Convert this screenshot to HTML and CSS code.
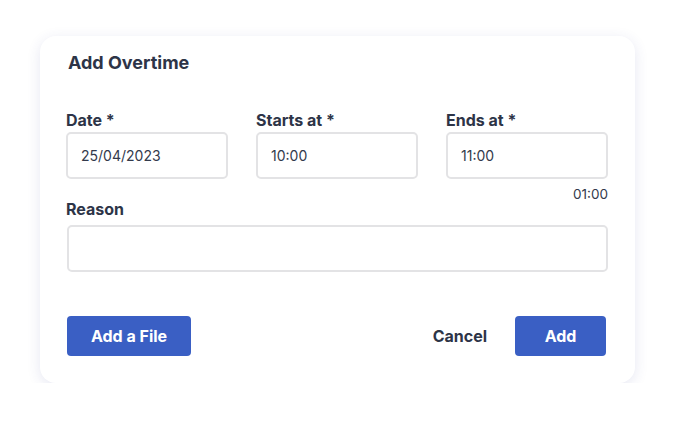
FILE: index.html
```html
<!DOCTYPE html>
<html>
<head>
<meta charset="utf-8">
<link rel="stylesheet" href="styles.css">
</head>
<body>
<div class="page">
  <div class="card">
    <h1 class="title">Add Overtime</h1>
    <div class="row">
      <div class="field">
        <label class="label">Date *</label>
        <div class="input">25/04/2023</div>
      </div>
      <div class="field">
        <label class="label">Starts at *</label>
        <div class="input">10:00</div>
      </div>
      <div class="field">
        <label class="label">Ends at *</label>
        <div class="input">11:00</div>
      </div>
    </div>
    <div class="duration">01:00</div>
    <label class="label reason-label">Reason</label>
    <div class="input reason"></div>
    <div class="actions">
      <button class="btn primary file">Add a File</button>
      <div class="right">
        <button class="btn link">Cancel</button>
        <button class="btn primary add">Add</button>
      </div>
    </div>
  </div>
</div>
</body>
</html>
```
FILE: styles.css
```css
* { box-sizing: border-box; }
html, body { margin: 0; padding: 0; background: #ffffff; }
body { font-family: "Inter", "Open Sans", sans-serif; color: #2d3447; }
.page { padding: 36px 40px 0 40px; }
.card {
  width: 595px;
  height: 347px;
  background: #fff;
  border-radius: 16px;
  box-shadow: 0 3px 14px rgba(50, 60, 150, 0.12);
  padding: 14px 27px 0 26px;
}
.title {
  margin: 0 0 0 2px;
  font-size: 18px;
  font-weight: 700;
  line-height: 26px;
  height: 26px;
  color: #2d3447;
}
.row {
  display: grid;
  grid-template-columns: 162px 162px 162px;
  column-gap: 28px;
  margin-top: 33px;
}
.field { display: flex; flex-direction: column; }
.label {
  display: block;
  font-size: 16px;
  font-weight: 700;
  line-height: 22px;
  height: 22px;
  margin-bottom: 1px;
  color: #2d3447;
}
.input {
  height: 47px;
  border: 2px solid #e3e3e5;
  border-radius: 5px;
  font-size: 14px;
  line-height: 43px;
  padding-left: 13px;
  color: #333a4c;
}
.duration {
  text-align: right;
  font-size: 13.5px;
  line-height: 18px;
  height: 18px;
  margin-top: 6px;
  color: #333a4c;
}
.reason-label { margin-top: -5px; margin-bottom: 5px; }
.reason { margin-left: 1px; width: 541px; }
.actions {
  display: flex;
  justify-content: space-between;
  align-items: center;
  margin-top: 44px;
  padding-left: 1px;
  padding-right: 2px;
}
.right { display: flex; align-items: center; gap: 28px; }
.btn {
  font-family: inherit;
  font-size: 16px;
  font-weight: 700;
  border: none;
  border-radius: 4px;
  height: 40px;
  padding: 0;
  cursor: pointer;
}
.primary { background: #3a5fc4; color: #fff; }
.file { width: 124px; }
.add { width: 91px; }
.link { background: transparent; color: #2d3447; }
```
